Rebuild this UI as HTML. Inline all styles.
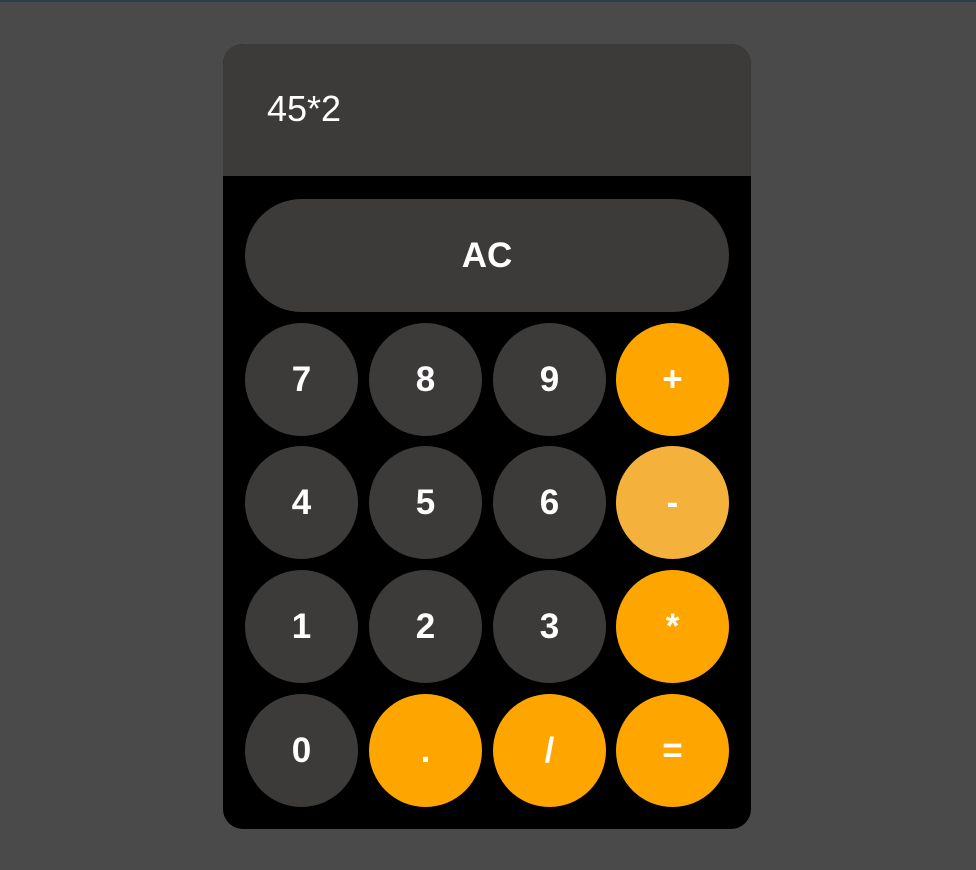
<!DOCTYPE html>
<html><head><style>
html,body{margin:0;padding:0;}
body{width:976px;height:870px;background:#4a4a4a;position:relative;overflow:hidden;font-family:"Liberation Sans",Arial,sans-serif;border-top:2px solid #2c3e48;box-sizing:border-box;}
.calc{position:absolute;left:223px;top:42px;width:528px;height:785px;background:#000;border-radius:20px;overflow:hidden;}
.disp{position:absolute;left:0;top:0;width:528px;height:132px;background:#3d3b39;}
.disp span{position:absolute;left:44px;top:44px;color:#fff;font-size:36px;line-height:42px;}
.b{position:absolute;width:113px;height:113px;border-radius:50%;background:#3d3b39;color:#fff;font-weight:bold;font-size:35px;display:flex;align-items:center;justify-content:center;}
.o{background:#ffa500;}
.l{background:#f4b23c;}
.ac{width:484px;border-radius:57px;}
</style></head><body>
<div class="calc">
<div class="disp"><span>45*2</span></div>
<div class="b ac" style="left:22px;top:155px">AC</div>
<div class="b" style="left:22px;top:279px">7</div>
<div class="b" style="left:146px;top:279px">8</div>
<div class="b" style="left:270px;top:279px">9</div>
<div class="b o" style="left:393px;top:279px">+</div>
<div class="b" style="left:22px;top:402px">4</div>
<div class="b" style="left:146px;top:402px">5</div>
<div class="b" style="left:270px;top:402px">6</div>
<div class="b l" style="left:393px;top:402px">-</div>
<div class="b" style="left:22px;top:526px">1</div>
<div class="b" style="left:146px;top:526px">2</div>
<div class="b" style="left:270px;top:526px">3</div>
<div class="b o" style="left:393px;top:526px">*</div>
<div class="b" style="left:22px;top:650px">0</div>
<div class="b o" style="left:146px;top:650px">.</div>
<div class="b o" style="left:270px;top:650px">/</div>
<div class="b o" style="left:393px;top:650px">=</div>
</div>
</body></html>
